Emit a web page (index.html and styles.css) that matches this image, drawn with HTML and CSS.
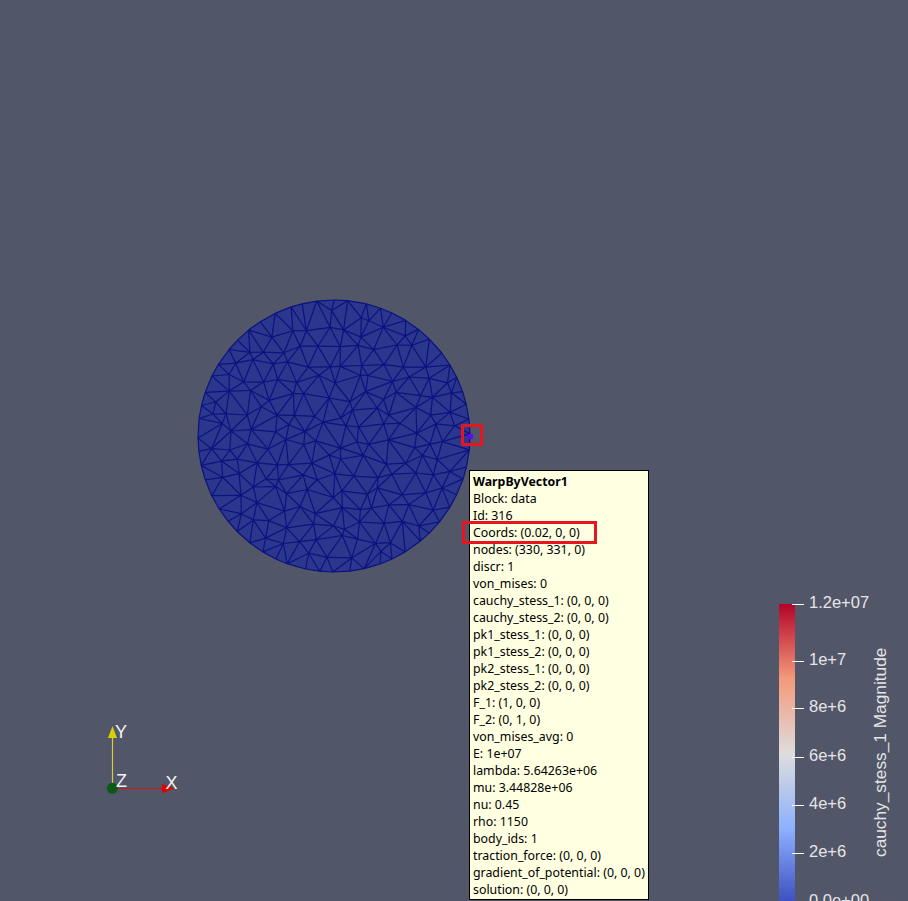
FILE: index.html
```html
<!DOCTYPE html>
<html lang="en">
<head>
<meta charset="utf-8">
<title>ParaView render view</title>
<link rel="stylesheet" href="styles.css">
</head>
<body>
<main class="view">
  <svg class="mesh" id="mesh" width="280" height="280" viewBox="-140 -140 280 280" aria-label="Warped mesh">
    <circle class="mesh-disc" r="136"></circle>
    <g class="mesh-lines" id="mesh-lines"></g>
  </svg>
  <div class="picked-point"></div>
  <div class="mark mark-point"></div>

  <section class="tooltip">
    <div class="tip-title">WarpByVector1</div>
    <div>Block: data</div>
    <div>Id: 316</div>
    <div>Coords: (0.02, 0, 0)</div>
    <div>nodes: (330, 331, 0)</div>
    <div>discr: 1</div>
    <div>von_mises: 0</div>
    <div>cauchy_stess_1: (0, 0, 0)</div>
    <div>cauchy_stess_2: (0, 0, 0)</div>
    <div>pk1_stess_1: (0, 0, 0)</div>
    <div>pk1_stess_2: (0, 0, 0)</div>
    <div>pk2_stess_1: (0, 0, 0)</div>
    <div>pk2_stess_2: (0, 0, 0)</div>
    <div>F_1: (1, 0, 0)</div>
    <div>F_2: (0, 1, 0)</div>
    <div>von_mises_avg: 0</div>
    <div>E: 1e+07</div>
    <div>lambda: 5.64263e+06</div>
    <div>mu: 3.44828e+06</div>
    <div>nu: 0.45</div>
    <div>rho: 1150</div>
    <div>body_ids: 1</div>
    <div>traction_force: (0, 0, 0)</div>
    <div>gradient_of_potential: (0, 0, 0)</div>
    <div>solution: (0, 0, 0)</div>
  </section>
  <div class="mark mark-coords"></div>

  <svg class="axes" width="100" height="90" viewBox="95 715 100 90" aria-label="Orientation axes">
    <line x1="112.5" y1="788" x2="112.5" y2="736" class="axis-y"></line>
    <polygon points="112.5,726 108,738 117,738" class="cone-y"></polygon>
    <line x1="112" y1="788.5" x2="165" y2="788.5" class="axis-x"></line>
    <polygon points="175,788.5 162,784 162,793" class="cone-x"></polygon>
    <circle cx="112.3" cy="788.3" r="5.5" class="origin"></circle>
    <text x="115" y="738" class="axis-label">Y</text>
    <text x="116" y="787" class="axis-label">Z</text>
    <text x="165.5" y="789" class="axis-label">X</text>
  </svg>

  <aside class="legend">
    <div class="legend-bar"></div>
    <div class="tick tick-0"><i></i><span>1.2e+07</span></div>
    <div class="tick tick-1"><i></i><span>1e+7</span></div>
    <div class="tick tick-2"><i></i><span>8e+6</span></div>
    <div class="tick tick-3"><i></i><span>6e+6</span></div>
    <div class="tick tick-4"><i></i><span>4e+6</span></div>
    <div class="tick tick-5"><i></i><span>2e+6</span></div>
    <div class="tick tick-6"><span>0.0e+00</span></div>
    <div class="legend-title">cauchy_stess_1 Magnitude</div>
  </aside>
</main>
<script src="mesh.js"></script>
</body>
</html>
```
FILE: styles.css
```css
html, body {
  margin: 0;
  padding: 0;
  height: 100%;
  overflow: hidden;
  background: #525669;
}

.view {
  position: relative;
  width: 908px;
  height: 901px;
  overflow: hidden;
  background: #525669;
}

/* Mesh */
.mesh {
  position: absolute;
  left: 194px;
  top: 296px;
}
.mesh-disc { fill: #2b378c; }
.mesh-lines line {
  stroke: #0c1280;
  stroke-width: 1.2;
}

.picked-point {
  position: absolute;
  left: 468px;
  top: 434px;
  width: 5px;
  height: 5px;
  background: #6a00ff;
}

/* Red annotations */
.mark {
  position: absolute;
  box-sizing: border-box;
  border: 3px solid #e8141f;
}
.mark-point {
  left: 461px;
  top: 424px;
  width: 22px;
  height: 22px;
}
.mark-coords {
  left: 462px;
  top: 521px;
  width: 135px;
  height: 23px;
}

/* Tooltip */
.tooltip {
  position: absolute;
  left: 469px;
  top: 470px;
  box-sizing: border-box;
  width: 180px;
  height: 430px;
  padding: 2px 3px 0;
  border: 1px solid #000;
  background: #ffffe1;
  color: #000;
  font-family: "Noto Sans", sans-serif;
  font-size: 12.35px;
  line-height: 17.02px;
  white-space: nowrap;
}
.tip-title { font-weight: 700; }

/* Orientation axes */
.axes {
  position: absolute;
  left: 95px;
  top: 715px;
}
.axis-y { stroke: #d6cf3c; stroke-width: 1.2; }
.axis-x { stroke: #d01818; stroke-width: 1.2; }
.cone-y { fill: #d8d000; }
.cone-x { fill: #e00000; }
.origin { fill: #0b5a14; }
.axis-label {
  fill: #f2f2f2;
  font-family: "Liberation Sans", sans-serif;
  font-size: 18px;
}

/* Colour legend */
.legend {
  position: absolute;
  inset: 0;
  color: #e6e6e6;
  font-family: "Liberation Sans", sans-serif;
  font-size: 16.5px;
}
.legend-bar {
  position: absolute;
  left: 779px;
  top: 604px;
  width: 16px;
  height: 300px;
  background: linear-gradient(to top, #3b4cc0 0%, #8db0fe 25%, #dddddd 50%, #f49a7b 75%, #b40426 100%);
}
.tick {
  position: absolute;
  left: 792px;
  display: flex;
  align-items: center;
  height: 2px;
  white-space: nowrap;
}
.tick i {
  display: block;
  width: 12px;
  height: 1px;
  background: #fff;
  margin-right: 5px;
}
.tick span { margin-bottom: 4px; }
.tick-0 { top: 603px; }
.tick-1 { top: 660px; }
.tick-2 { top: 707px; }
.tick-3 { top: 756px; }
.tick-4 { top: 804px; }
.tick-5 { top: 852px; }
.tick-6 { top: 901px; padding-left: 17px; }
.legend-title {
  position: absolute;
  left: 870px;
  top: 647px;
  height: 210px;
  font-size: 17.3px;
  line-height: 20px;
  writing-mode: vertical-rl;
  transform: rotate(180deg);
  white-space: nowrap;
  text-align: left;
}
```
FILE: mesh.js
```js
// Builds the triangulated disc: jittered interior points plus a boundary ring,
// joined by a Bowyer-Watson Delaunay triangulation.
(function () {
  var R = 136, seed = 987654;
  function rnd() {
    seed = (seed * 1664525 + 1013904223) % 4294967296;
    return seed / 4294967296;
  }
  var pts = [], n = 56, i;
  for (i = 0; i < n; i++) {
    var a = (i + (rnd() - 0.5) * 0.3) / n * Math.PI * 2;
    pts.push([R * Math.cos(a), R * Math.sin(a)]);
  }
  var s = 18.5, row = 0, y, x;
  for (y = -R; y <= R; y += s * 0.866, row++) {
    for (x = -R + (row % 2 ? s / 2 : 0); x <= R; x += s) {
      var px = x + (rnd() - 0.5) * 12, py = y + (rnd() - 0.5) * 12;
      if (Math.hypot(px, py) < R - 10) pts.push([px, py]);
    }
  }
  var base = pts.length;
  pts.push([-1000, -1000], [1000, -1000], [0, 1000]);
  var tris = [[base, base + 1, base + 2]];
  function inCircle(t, p) {
    var A = pts[t[0]], B = pts[t[1]], C = pts[t[2]];
    var d = 2 * (A[0] * (B[1] - C[1]) + B[0] * (C[1] - A[1]) + C[0] * (A[1] - B[1]));
    var a2 = A[0] * A[0] + A[1] * A[1], b2 = B[0] * B[0] + B[1] * B[1], c2 = C[0] * C[0] + C[1] * C[1];
    var ux = (a2 * (B[1] - C[1]) + b2 * (C[1] - A[1]) + c2 * (A[1] - B[1])) / d;
    var uy = (a2 * (C[0] - B[0]) + b2 * (A[0] - C[0]) + c2 * (B[0] - A[0])) / d;
    var r2 = (A[0] - ux) * (A[0] - ux) + (A[1] - uy) * (A[1] - uy);
    return (p[0] - ux) * (p[0] - ux) + (p[1] - uy) * (p[1] - uy) < r2;
  }
  for (i = 0; i < base; i++) {
    var edges = {}, keep = [];
    tris.forEach(function (t) {
      if (inCircle(t, pts[i])) {
        [[t[0], t[1]], [t[1], t[2]], [t[2], t[0]]].forEach(function (e) {
          var k = Math.min(e[0], e[1]) + "_" + Math.max(e[0], e[1]);
          edges[k] = edges[k] ? null : e;
        });
      } else keep.push(t);
    });
    Object.keys(edges).forEach(function (k) {
      if (edges[k]) keep.push([edges[k][0], edges[k][1], i]);
    });
    tris = keep;
  }
  var seen = {}, group = document.getElementById("mesh-lines");
  tris.forEach(function (t) {
    [[t[0], t[1]], [t[1], t[2]], [t[2], t[0]]].forEach(function (e) {
      if (e[0] >= base || e[1] >= base) return;
      var k = Math.min(e[0], e[1]) + "_" + Math.max(e[0], e[1]);
      if (seen[k]) return;
      seen[k] = 1;
      var l = document.createElementNS("http://www.w3.org/2000/svg", "line");
      l.setAttribute("x1", pts[e[0]][0].toFixed(1));
      l.setAttribute("y1", pts[e[0]][1].toFixed(1));
      l.setAttribute("x2", pts[e[1]][0].toFixed(1));
      l.setAttribute("y2", pts[e[1]][1].toFixed(1));
      group.appendChild(l);
    });
  });
})();
```
